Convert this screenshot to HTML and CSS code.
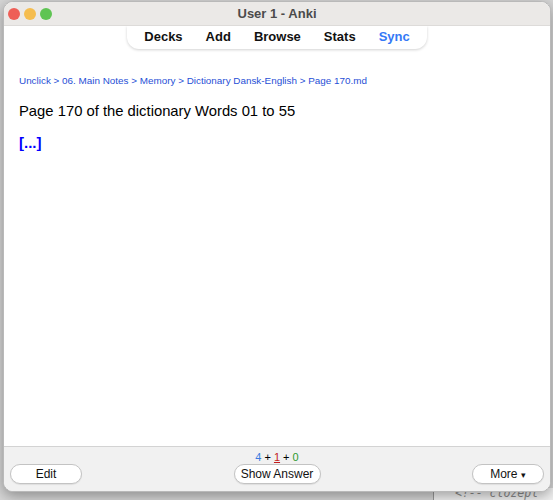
FILE: index.html
```html
<!DOCTYPE html>
<html lang="en">
<head>
    <meta charset="UTF-8">
    <meta name="viewport" content="width=device-width, initial-scale=1.0">
    <title>User 1 - Anki</title>
    <link rel="stylesheet" href="styles.css">
</head>
<body>
    <div class="desk-code">&lt;!-- clozepl</div>

    <div class="window">
        <div class="titlebar">
            <div class="lights">
                <span class="light red"></span>
                <span class="light yellow"></span>
                <span class="light green"></span>
            </div>
            <div class="title">User 1 - Anki</div>
        </div>

        <div class="main">
            <nav class="toolbar">
                <a href="#">Decks</a>
                <a href="#">Add</a>
                <a href="#">Browse</a>
                <a href="#">Stats</a>
                <a href="#" class="sync">Sync</a>
            </nav>

            <div class="card">
                <div class="breadcrumb">Unclick &gt; 06. Main Notes &gt; Memory &gt; Dictionary Dansk-English &gt; Page 170.md</div>
                <div class="question">Page 170 of the dictionary Words 01 to 55</div>
                <div class="cloze">[...]</div>
            </div>
        </div>

        <div class="bottombar">
            <div class="side">
                <button class="btn">Edit</button>
            </div>
            <div class="middle">
                <div class="counts">
                    <span class="new">4</span> + <span class="learn">1</span> + <span class="review">0</span>
                </div>
                <button class="btn answer">Show Answer</button>
            </div>
            <div class="side right">
                <button class="btn">More <span class="caret">&#9662;</span></button>
            </div>
        </div>
    </div>
</body>
</html>
```

FILE: styles.css
```css
body {
    margin: 0;
    width: 553px;
    height: 500px;
    overflow: hidden;
    position: relative;
    background: #d6d6d6;
    font-family: "Liberation Sans", Arial, sans-serif;
}

/* editor text showing below the window */
.desk-code {
    position: absolute;
    left: 433px;
    top: 488px;
    width: 98px;
    height: 12px;
    padding-left: 21px;
    border-left: 1px solid #9a9a9a;
    font-family: "DejaVu Sans Mono", monospace;
    font-style: italic;
    font-size: 11.5px;
    line-height: 11px;
    color: #8a8a8a;
    white-space: nowrap;
    background: #f2f2f2;
}

.window {
    position: relative;
    margin: 1px 0 0 3px;
    width: 548px;
    height: 491px;
    display: flex;
    flex-direction: column;
    border: 1px solid #b9b9b9;
    border-radius: 10px;
    overflow: hidden;
    background: #fff;
    box-shadow: 0 4px 14px rgba(0, 0, 0, 0.35);
    box-sizing: border-box;
}

.titlebar {
    height: 23px;
    flex-shrink: 0;
    display: flex;
    align-items: center;
    position: relative;
    background: #ebe9e7;
    border-bottom: 1px solid #dddbd9;
}

.lights {
    display: flex;
    gap: 4px;
    padding-left: 4px;
}

.light {
    width: 12px;
    height: 12px;
    border-radius: 50%;
}

.red { background: #ee5f57; }
.yellow { background: #f5bd4f; }
.green { background: #5fc453; }

.title {
    position: absolute;
    left: 0;
    right: 0;
    text-align: center;
    font-size: 13px;
    font-weight: bold;
    color: #4b4b4b;
}

.main {
    flex: 1;
    display: flex;
    flex-direction: column;
}

.toolbar {
    align-self: center;
    display: flex;
    gap: 23px;
    padding: 3px 17px 4px;
    background: #fff;
    border-radius: 0 0 12px 12px;
    box-shadow: 0 1px 3px rgba(0, 0, 0, 0.18);
}

.toolbar a {
    font-size: 13px;
    font-weight: bold;
    color: #111;
    text-decoration: none;
    line-height: 16px;
}

.toolbar a.sync {
    color: #3478f6;
}

.card {
    padding: 25px 15px 0;
}

.breadcrumb {
    font-size: 9.9px;
    color: #1f4fd6;
    line-height: 13px;
}

.question {
    margin-top: 15px;
    font-size: 14.8px;
    color: #000;
    line-height: 18px;
}

.cloze {
    margin-top: 14px;
    font-size: 15px;
    font-weight: bold;
    color: #0000ff;
    line-height: 18px;
}

.bottombar {
    height: 45px;
    flex-shrink: 0;
    display: flex;
    justify-content: space-between;
    align-items: flex-end;
    padding: 0 6px 7px;
    background: #f1f1f1;
    border-top: 1px solid #d3d3d3;
    box-sizing: border-box;
}

.side {
    width: 100px;
}

.side.right {
    display: flex;
    justify-content: flex-end;
}

.middle {
    display: flex;
    flex-direction: column;
    align-items: center;
    gap: 1px;
}

.counts {
    font-size: 11px;
    line-height: 12px;
    color: #000;
}

.counts .new { color: #3a7be0; }
.counts .learn { color: #c21c1c; text-decoration: underline; }
.counts .review { color: #2d9a2d; }

.btn {
    height: 20px;
    width: 72px;
    padding: 0;
    font-family: "Liberation Sans", Arial, sans-serif;
    font-size: 12px;
    color: #111;
    background: #fff;
    border: 1px solid #c3c3c3;
    border-radius: 10px;
    box-shadow: 0 1px 1px rgba(0, 0, 0, 0.08);
}

.btn.answer {
    width: 87px;
}

.caret {
    font-size: 9px;
}
```
